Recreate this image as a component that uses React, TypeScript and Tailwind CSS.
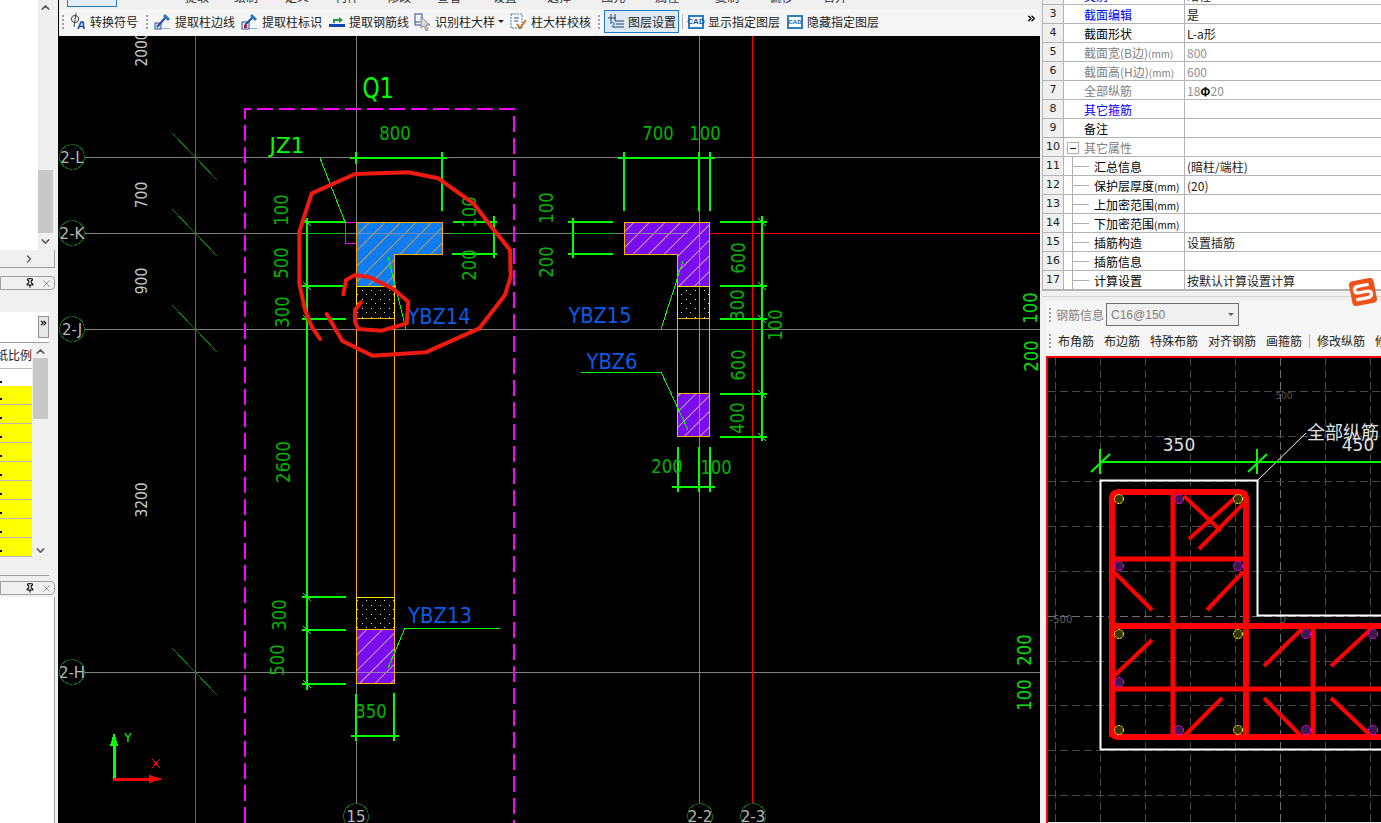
import { Pin, X } from "lucide-react";
import { ChevronUp, ChevronDown, ChevronRight, ChevronsRight } from "lucide-react";
import type { ReactNode } from "react";

const cjk = { fontFamily: '"Noto Sans CJK SC", sans-serif' };
const cadFont = '"DejaVu Sans", sans-serif';

const green = "#00ff00";
const dimText = "#00b400";
const blueText = "#0a5ce6";

type Row = { n: number; name: string; value?: ReactNode; color?: string; valueColor?: string; tree?: boolean; minus?: boolean };

const rows: Row[] = [
  { n: 2, name: "类别", value: "暗柱", color: "text-[#0000ff]" },
  { n: 3, name: "截面编辑", value: "是", color: "text-[#0000ff]" },
  { n: 4, name: "截面形状", value: "L-a形" },
  { n: 5, name: "截面宽(B边)(mm)", value: "800", color: "text-[#808080]", valueColor: "text-[#909090]" },
  { n: 6, name: "截面高(H边)(mm)", value: "600", color: "text-[#808080]", valueColor: "text-[#909090]" },
  {
    n: 7,
    name: "全部纵筋",
    value: (
      <>
        18<span className="text-black font-bold">Φ</span>20
      </>
    ),
    color: "text-[#808080]",
    valueColor: "text-[#909090]",
  },
  { n: 8, name: "其它箍筋", color: "text-[#0000ff]" },
  { n: 9, name: "备注" },
  { n: 10, name: "其它属性", color: "text-[#808080]", minus: true },
  { n: 11, name: "汇总信息", value: "(暗柱/端柱)", tree: true },
  { n: 12, name: "保护层厚度(mm)", value: "(20)", tree: true },
  { n: 13, name: "上加密范围(mm)", tree: true },
  { n: 14, name: "下加密范围(mm)", tree: true },
  { n: 15, name: "插筋构造", value: "设置插筋", tree: true },
  { n: 16, name: "插筋信息", tree: true },
  { n: 17, name: "计算设置", value: "按默认计算设置计算", tree: true },
];

// what is left of the toolbar row that is scrolled off the top of the shot
const clipped = [
  { t: "提取", ml: "ml-[68px]" },
  { t: "绘制", ml: "ml-[25px]" },
  { t: "定义", ml: "ml-[27px]" },
  { t: "构件", ml: "ml-[26px]" },
  { t: "修改", ml: "ml-[28px]" },
  { t: "查看", ml: "ml-[26px]" },
  { t: "设置", ml: "ml-[32px]" },
  { t: "选择", ml: "ml-[30px]" },
  { t: "图元", ml: "ml-[30px]" },
  { t: "属性", ml: "ml-[30px]" },
  { t: "复制", ml: "ml-[36px]" },
  { t: "偏移", ml: "ml-[30px]" },
  { t: "合并", ml: "ml-[30px]" },
];

const Grip = () => (
  <span className="flex flex-col gap-[2px] mr-1 shrink-0">
    <i className="block w-[2px] h-[2px] bg-[#a0a0a0]" />
    <i className="block w-[2px] h-[2px] bg-[#a0a0a0]" />
    <i className="block w-[2px] h-[2px] bg-[#a0a0a0]" />
    <i className="block w-[2px] h-[2px] bg-[#a0a0a0]" />
  </span>
);

const ToolIcon = ({ kind }: { kind: string }) => {
  if (kind === "symbol")
    return (
      <svg width="17" height="17" viewBox="0 0 17 17" className="shrink-0">
        <circle cx="6" cy="6" r="3.6" fill="none" stroke="#444" strokeWidth="1" />
        <path d="M7 0 L5 14" stroke="#444" strokeWidth="1" />
        <path d="M9 16 L12 9 L14 9 L15 16 M10.4 13.5 H14.4" fill="none" stroke="#1f4fa8" strokeWidth="1.7" />
      </svg>
    );
  if (kind === "pick")
    return (
      <svg width="17" height="17" viewBox="0 0 17 17" className="shrink-0">
        <rect x="1" y="10" width="6" height="6" fill="#dbe7f5" stroke="#2a4f9a" />
        <path d="M3 14 L12 4" stroke="#2a4f9a" strokeWidth="2" />
        <path d="M10 2 L15 7" stroke="#2a7fb5" strokeWidth="3" />
        <path d="M7 15.5 H16" stroke="#8db1dc" strokeWidth="1" />
      </svg>
    );
  if (kind === "mark")
    return (
      <svg width="17" height="17" viewBox="0 0 17 17" className="shrink-0">
        <rect x="1" y="9" width="7" height="7" fill="#e8eef7" stroke="#2a4f9a" />
        <rect x="3" y="12" width="3" height="3" fill="#d01030" />
        <path d="M4 12 L12 4" stroke="#2a4f9a" strokeWidth="2" />
        <path d="M10 2 L15 7" stroke="#2a7fb5" strokeWidth="3" />
        <path d="M8 15.5 H16" stroke="#8db1dc" strokeWidth="1" />
      </svg>
    );
  if (kind === "rebar")
    return (
      <svg width="16" height="17" viewBox="0 0 16 17" className="shrink-0">
        <path d="M0 12.5 H16" stroke="#1346b4" strokeWidth="3" />
        <path d="M5 10 V7 H12" fill="none" stroke="#1f9a3c" strokeWidth="2" />
        <path d="M10 4 L14 7 L10 10 Z" fill="#1f9a3c" />
      </svg>
    );
  if (kind === "cursor")
    return (
      <svg width="17" height="18" viewBox="0 0 17 18" className="shrink-0">
        <rect x="1" y="1" width="7" height="11" fill="#f4f7fb" stroke="#2a4f9a" />
        <path d="M1 9 H6" stroke="#2a4f9a" />
        <path d="M7 4 L16 12 H12 L14 17 L12 17.5 L10 13 L7 15 Z" fill="#d8d8d8" stroke="#707070" strokeWidth="0.8" />
      </svg>
    );
  if (kind === "check")
    return (
      <svg width="17" height="17" viewBox="0 0 17 17" className="shrink-0">
        <rect x="1" y="1" width="11" height="14" fill="#fff" stroke="#2a7fb5" strokeDasharray="2 1" />
        <path d="M4 5 H9 M4 8 H8" stroke="#2a4f9a" />
        <path d="M7 11 L10 15 L16 7" fill="none" stroke="#c8742a" strokeWidth="2" />
      </svg>
    );
  if (kind === "layers")
    return (
      <svg width="16" height="16" viewBox="0 0 16 16" className="shrink-0">
        <path d="M3 0 V10 M7 0 V7 M0 4 H8 M7 7 H16 M8 10 H16 M4 13 H16" stroke="#23406f" strokeWidth="1" fill="none" />
        <path d="M7 10 L4 8 M7 10 L4 12" stroke="#2a6fd0" strokeWidth="1" />
      </svg>
    );
  const big = kind === "cad";
  return (
    <span
      className={`shrink-0 flex items-center justify-center w-4 h-[14px] border-2 border-[#2f7fc0] bg-white text-[#1f55a8] font-bold leading-none ${big ? "text-[8px]" : "text-[6px]"}`}
      style={{ fontFamily: '"Liberation Sans", sans-serif' }}
    >
      CAD
    </span>
  );
};

const ToolBtn = ({ icon, label, caret, w }: { icon: string; label: string; caret?: boolean; w: string }) => (
  <div className={`flex items-center gap-1 shrink-0 ${w}`}>
    <ToolIcon kind={icon} />
    <span className="text-[12px] text-[#222] whitespace-nowrap" style={cjk}>
      {label}
    </span>
    {caret && <span className="w-0 h-0 ml-[-1px] border-x-[3px] border-x-transparent border-t-[3px] border-t-[#222]" />}
  </div>
);

const TitleBar = () => (
  <div className="h-[14px] w-[55px] border border-[#a0a0a0] rounded-r-sm bg-[#f0f0f0] flex items-center justify-end gap-[6px] pr-[2px]">
    <Pin size={10} strokeWidth={2.5} className="text-black" />
    <X size={11} strokeWidth={1} className="text-[#222]" />
  </div>
);

const LeftPanel = () => (
  <div className="w-[59px] shrink-0 h-full bg-[#f0f0f0] border-r border-black flex flex-col overflow-hidden">
    <div className="flex h-[250px] w-[53px] bg-white">
      <div className="w-[38px] bg-white" />
      <div className="w-[15px] bg-[#efefef] flex flex-col items-center">
        <ChevronUp size={13} strokeWidth={3} className="text-[#606060] mt-[1px]" />
        <div className="w-full h-[63px] bg-[#c8c8c8] mt-[156px]" />
        <ChevronDown size={13} strokeWidth={3} className="text-[#606060] mt-[2px]" />
      </div>
    </div>
    <div className="h-[18px] w-[55px] border-r border-b border-[#a0a0a0] flex justify-center items-center pl-[4px]">
      <ChevronRight size={12} strokeWidth={3} className="text-[#606060]" />
    </div>
    <div className="mt-2">
      <TitleBar />
    </div>
    <div className="mt-[22px] h-[262px] w-[53px] bg-white border-r-4 border-[#f0f0f0] flex flex-col relative">
      <div className="h-[26px] flex justify-end">
        <div className="w-[11px] h-[22px] mt-[4px] border border-[#909090] bg-[#e8e8e8] flex justify-center pt-[1px]">
          <ChevronsRight size={10} strokeWidth={3} className="text-black" />
        </div>
      </div>
      <div className="mt-[4px] flex-1 border-y border-[#a0a0a0] flex bg-[#f0f0f0] pb-[18px]">
        <div className="w-[32px] bg-white overflow-hidden flex flex-col">
          <div className="h-[25px] text-[12px] text-[#222] whitespace-nowrap flex justify-end leading-[24px]" style={cjk}>
            纸比例
          </div>
          <div className="h-[18px] border-t border-[#c0c0c0] relative">
            <i className="absolute left-0 top-[12px] w-[2px] h-[2px] bg-black" />
          </div>
          {[0, 1, 2, 3, 4, 5, 6, 7, 8].map((i) => (
            <div key={i} className="h-[19px] bg-[#ffff00] border-b border-[#b8b8b8] relative shrink-0">
              <i className="absolute left-0 top-[12px] w-[2px] h-[2px] bg-black" />
            </div>
          ))}
        </div>
        <div className="w-[15px] ml-[1px] flex flex-col items-center">
          <ChevronUp size={13} strokeWidth={3} className="text-[#606060] mt-[2px]" />
          <div className="w-full h-[61px] bg-[#c8c8c8]" />
          <div className="flex-1" />
          <ChevronDown size={13} strokeWidth={3} className="text-[#606060]" />
        </div>
      </div>
    </div>
    <div className="mt-[7px]">
      <TitleBar />
    </div>
    <div className="mt-[2px] flex-1 w-[55px] bg-white border-r border-[#a0a0a0]" />
  </div>
);

const MainToolbar = () => (
  <div className="shrink-0">
    {/* clipped first toolbar row */}
    <div className="h-[7px] bg-[#f0f0f0] relative overflow-hidden flex items-start pl-[8px]">
      <div className="w-[50px] h-[7px] shrink-0 border-x border-b border-[#1f7bc4] bg-[#e4eefa]" />
      {clipped.map((c) => (
        <span key={c.t} className={`text-[12px] leading-[12px] -mt-[9px] text-[#333] shrink-0 ${c.ml}`} style={cjk}>
          {c.t}
        </span>
      ))}
    </div>
    <div className="h-[29px] bg-[#f0f0f0] flex items-center">
      <div className="h-[26px] w-[84px] ml-px bg-[#f6f6f6] rounded-sm flex items-center pl-[2px] gap-[1px] shrink-0">
        <Grip />
        <ToolBtn icon="symbol" label="转换符号" w="w-[70px]" />
      </div>
      <div className="h-[26px] w-[451px] bg-[#f6f6f6] rounded-sm flex items-center pl-[2px] gap-[2px] shrink-0">
        <Grip />
        <ToolBtn icon="pick" label="提取柱边线" w="w-[85px]" />
        <ToolBtn icon="mark" label="提取柱标识" w="w-[86px]" />
        <ToolBtn icon="rebar" label="提取钢筋线" w="w-[83px]" />
        <ToolBtn icon="cursor" label="识别柱大样" caret w="w-[94px]" />
        <ToolBtn icon="check" label="柱大样校核" w="w-[84px]" />
      </div>
      <div className="h-[26px] flex-1 ml-[1px] bg-[#f6f6f6] rounded-sm flex items-center pl-[2px] shrink-0">
        <Grip />
        <div className="h-[23px] w-[75px] border border-[#1f7bc4] bg-[#dde9f5] flex items-center gap-[4px] pl-[3px] shrink-0">
          <ToolIcon kind="layers" />
          <span className="text-[12px] text-[#222] whitespace-nowrap" style={cjk}>
            图层设置
          </span>
        </div>
        <div className="w-px h-[15px] bg-[#b0b0b0] mx-[3px]" />
        <div className="w-[99px] ml-[2px] shrink-0">
          <ToolBtn icon="cad" label="显示指定图层" w="" />
        </div>
        <ToolBtn icon="cad2" label="隐藏指定图层" w="" />
        <div className="flex-1" />
        <ChevronsRight size={11} strokeWidth={3} className="text-black mr-[3px] mb-[6px]" />
      </div>
    </div>
  </div>
);

const scribbleOuter = [
  [180, 597], [155, 560], [135, 510], [118, 430], [118, 275], [155, 160], [285, 102], [445, 97], [535, 115], [640, 190], [690, 255], [750, 330], [752, 410], [735, 465], [658, 565], [497, 637], [337, 647], [247, 603], [200, 522],
];
const scribbleInner = [
  [250, 463], [258, 420], [285, 405], [330, 412], [400, 447], [445, 485], [440, 550], [365, 572], [295, 567], [285, 545], [285, 510], [303, 487],
];
const toPage = (pts: number[][]) => pts.map(([x, y]) => `${260 + x / 3},${140 + y / 3}`).join(" ");

const Bubble = ({ x, y, t }: { x: number; y: number; t: string }) => (
  <g>
    <circle cx={x} cy={y} r={12.5} fill="#000" stroke="#0a6a0a" strokeWidth="1" strokeDasharray="9 0.5" />
    <text x={x} y={y + 5.5} textAnchor="middle" fontSize="15" fill="#b8b8b8" fontFamily={cadFont}>
      {t}
    </text>
  </g>
);

const DimText = ({ x, y, t, rot, fill = dimText, size = 19 }: { x: number; y: number; t: string; rot?: boolean; fill?: string; size?: number }) => (
  <text
    x={x}
    y={y}
    textAnchor="middle"
    dominantBaseline="central"
    fontSize={size}
    fill={fill}
    fontFamily={cadFont}
    textLength={t.length * (size * 0.55)}
    lengthAdjust="spacingAndGlyphs"
    transform={rot ? `rotate(-90 ${x} ${y})` : undefined}
  >
    {t}
  </text>
);

const Label = ({ x, y, t, w, fill = blueText, size = 22 }: { x: number; y: number; t: string; w: number; fill?: string; size?: number }) => (
  <text x={x} y={y} textAnchor="middle" fontSize={size} fill={fill} fontFamily={cadFont} textLength={w} lengthAdjust="spacingAndGlyphs">
    {t}
  </text>
);

const L = ({ x1, y1, x2, y2, c = green, w = 2 }: { x1: number; y1: number; x2: number; y2: number; c?: string; w?: number }) => (
  <line x1={x1} y1={y1} x2={x2} y2={y2} stroke={c} strokeWidth={w} />
);

const Tick = ({ x, y }: { x: number; y: number }) => <line x1={x - 4} y1={y - 4} x2={x + 4} y2={y + 4} stroke={green} strokeWidth="1" />;

const MainCanvas = () => (
  <svg viewBox="59 36 981 787" className="block w-[981px] h-[787px] bg-black" style={{ shapeRendering: "crispEdges" }}>
    <defs>
      <pattern id="hatchBlue" width="11" height="11" patternUnits="userSpaceOnUse" patternTransform="rotate(45)">
        <rect width="11" height="11" fill="#0f7cf2" />
        <line x1="0" y1="0" x2="0" y2="11" stroke="#c49a50" strokeWidth="1" />
      </pattern>
      <pattern id="hatchPurple" width="11" height="11" patternUnits="userSpaceOnUse" patternTransform="rotate(45)">
        <rect width="11" height="11" fill="#7a0cf0" />
        <line x1="0" y1="0" x2="0" y2="11" stroke="#c8a0a8" strokeWidth="1" />
      </pattern>
      <pattern id="dots" width="9" height="9" patternUnits="userSpaceOnUse">
        <rect width="9" height="9" fill="#000" />
        <rect x="2" y="2" width="1" height="1" fill="#ddd" />
        <rect x="6" y="6" width="1" height="1" fill="#ddd" />
      </pattern>
    </defs>

    {/* axis lines */}
    <L x1={195.5} y1={36} x2={195.5} y2={823} c="#5f6f5f" w={1} />
    <L x1={356.5} y1={36} x2={356.5} y2={823} c="#808080" w={1} />
    <L x1={699.5} y1={36} x2={699.5} y2={823} c="#808080" w={1} />
    <L x1={59} y1={157.5} x2={1040} y2={157.5} c="#808080" w={1} />
    <L x1={59} y1={233.5} x2={688} y2={233.5} c="#808080" w={1} />
    <L x1={59} y1={329.5} x2={1040} y2={329.5} c="#808080" w={1} />
    <L x1={59} y1={672.5} x2={1040} y2={672.5} c="#808080" w={1} />
    <L x1={752.5} y1={36} x2={752.5} y2={823} c="#ff0000" w={1} />
    <L x1={688} y1={233.5} x2={1040} y2={233.5} c="#ff0000" w={1} />

    {/* diagonal axis marks */}
    {[133, 209, 305, 648].map((y) => (
      <line key={y} x1={172} y1={y} x2={217} y2={y + 47} stroke="#0a7a0a" strokeWidth="1" />
    ))}

    <Bubble x={72} y={157} t="2-L" />
    <Bubble x={72} y={233} t="2-K" />
    <Bubble x={72} y={329} t="2-J" />
    <Bubble x={72} y={672} t="2-H" />
    <Bubble x={356} y={816} t="15" />
    <Bubble x={700} y={816} t="2-2" />
    <Bubble x={753} y={816} t="2-3" />

    <DimText x={141} y={49} t="2000" rot fill="#c8c8c8" size={16} />
    <DimText x={141} y={195} t="700" rot fill="#c8c8c8" size={16} />
    <DimText x={141} y={281} t="900" rot fill="#c8c8c8" size={16} />
    <DimText x={141} y={500} t="3200" rot fill="#c8c8c8" size={16} />

    {/* right side axis dims */}
    <DimText x={1030} y={308} t="100" rot fill="#00e000" />
    <DimText x={1031} y={356} t="200" rot fill="#00e000" />
    <DimText x={1024} y={650} t="200" rot fill="#00e000" />
    <DimText x={1024} y={695} t="100" rot fill="#00e000" />

    {/* magenta zone */}
    <path d="M245 823 V109 H514 V823" fill="none" stroke="#ff00ff" strokeWidth="2" strokeDasharray="16 6" />
    <Label x={378} y={98} t="Q1" w={31} fill={green} size={28} />

    <Label x={287} y={153} t="JZ1" w={35} fill={green} size={21} />
    <L x1={320} y1={158} x2={345} y2={222} w={1} />
    <path d="M356 222.5 H345.5 V243.5 H356" fill="none" stroke="#ff00ff" strokeWidth="1" />

    {/* column 1 */}
    <path d="M356.5 222.5 H442 V254 H394 V286 H356.5 Z" fill="url(#hatchBlue)" stroke="#ffa800" strokeWidth="1" />
    <L x1={356} y1={233.5} x2={442} y2={233.5} c="#6a8fb8" w={1} />
    <rect x={356.5} y={286.5} width={37.5} height={32} fill="url(#dots)" stroke="#ffe000" strokeWidth="1" />
    <rect x={356.5} y={318.5} width={37.5} height={279} fill="none" stroke="#ffb000" strokeWidth="1" />
    <rect x={356.5} y={597.5} width={37.5} height={32} fill="url(#dots)" stroke="#ffe000" strokeWidth="1" />
    <rect x={356.5} y={629.5} width={37.5} height={54} fill="url(#hatchPurple)" stroke="#ffb000" strokeWidth="1" />
    <L x1={356} y1={672.5} x2={394} y2={672.5} c="#9a7ab8" w={1} />
    <L x1={356.5} y1={150} x2={356.5} y2={211} c="#808080" w={1} />

    {/* column 1 dims */}
    <L x1={350} y1={158} x2={447} y2={158} />
    <L x1={356} y1={152} x2={356} y2={164} />
    <L x1={442} y1={152} x2={442} y2={211} />
    <DimText x={395} y={133} t="800" />
    <L x1={307} y1={218} x2={307} y2={690} />
    {[222, 286, 319, 597, 630, 684].map((y) => (
      <g key={y}>
        <L x1={302} y1={y} x2={346} y2={y} />
        <Tick x={307} y={y} />
      </g>
    ))}
    <L x1={307} y1={233} x2={345} y2={233} c="#00c000" w={1} />
    <DimText x={281} y={210} t="100" rot />
    <DimText x={281} y={263} t="500" rot />
    <DimText x={282} y={312} t="300" rot />
    <DimText x={283} y={462} t="2600" rot />
    <DimText x={279} y={615} t="300" rot />
    <DimText x={277} y={660} t="500" rot />
    <L x1={453} y1={222} x2={497} y2={222} />
    <L x1={452} y1={233} x2={497} y2={233} c="#00c000" w={1} />
    <L x1={452} y1={254} x2={497} y2={254} />
    <L x1={494} y1={216} x2={494} y2={258} />
    <DimText x={469} y={212} t="100" rot />
    <DimText x={469} y={265} t="200" rot />
    <L x1={351} y1={736} x2={399} y2={736} />
    <L x1={356} y1={694} x2={356} y2={741} />
    <L x1={394} y1={693} x2={394} y2={741} />
    <DimText x={371} y={711} t="350" />
    <Label x={439} y={324} t="YBZ14" w={63} />
    <L x1={388} y1={257} x2={406} y2={329} w={1} />
    <Label x={440} y={623} t="YBZ13" w={64} />
    <path d="M500 628 H405 L388 668" fill="none" stroke={green} strokeWidth="1" />

    {/* column 2 */}
    <path d="M624.5 222.5 H709.5 V286 H677 V254 H624.5 Z" fill="url(#hatchPurple)" stroke="#ffb000" strokeWidth="1" />
    <rect x={677.5} y={286.5} width={32} height={32} fill="url(#dots)" stroke="#ffe000" strokeWidth="1" />
    <rect x={677.5} y={318.5} width={32} height={75} fill="none" stroke="#ffb000" strokeWidth="1" />
    <rect x={677.5} y={393.5} width={32} height={43} fill="url(#hatchPurple)" stroke="#ffb000" strokeWidth="1" />
    <L x1={624} y1={233.5} x2={688} y2={233.5} c="#9a7ab8" w={1} />
    <L x1={699.5} y1={222} x2={699.5} y2={437} c="#a08ab0" w={1} />

    {/* column 2 dims */}
    <L x1={618} y1={158} x2={715} y2={158} />
    <L x1={624} y1={152} x2={624} y2={211} />
    <L x1={699} y1={152} x2={699} y2={211} />
    <L x1={710} y1={152} x2={710} y2={211} />
    <DimText x={658} y={133} t="700" />
    <DimText x={705} y={133} t="100" />
    <L x1={573} y1={218} x2={573} y2={258} />
    <L x1={568} y1={222} x2={613} y2={222} />
    <L x1={568} y1={233} x2={614} y2={233} c="#00c000" w={1} />
    <L x1={568} y1={254} x2={613} y2={254} />
    <DimText x={546} y={208} t="100" rot />
    <DimText x={546} y={262} t="200" rot />
    <L x1={762} y1={216} x2={762} y2={441} />
    {[222, 286, 319, 394, 437].map((y) => (
      <g key={y}>
        <L x1={720} y1={y} x2={767} y2={y} />
        <Tick x={762} y={y} />
      </g>
    ))}
    <L x1={720} y1={329} x2={766} y2={329} c="#00c000" w={1} />
    <DimText x={738} y={258} t="600" rot />
    <DimText x={737} y={305} t="300" rot />
    <DimText x={738} y={365} t="600" rot />
    <DimText x={737} y={418} t="400" rot />
    <DimText x={775} y={325} t="100" rot />
    <L x1={672} y1={487} x2={715} y2={487} />
    <L x1={678} y1={447} x2={678} y2={492} />
    <L x1={699} y1={447} x2={699} y2={492} />
    <L x1={710} y1={447} x2={710} y2={492} />
    <DimText x={667} y={466} t="200" />
    <DimText x={716} y={467} t="100" />
    <Label x={600} y={323} t="YBZ15" w={63} />
    <Label x={612} y={369} t="YBZ6" w={51} />
    <path d="M661 329 L683 261" fill="none" stroke={green} strokeWidth="1" />
    <path d="M581 372 H661 L688 430" fill="none" stroke={green} strokeWidth="1" />

    {/* hand scribble */}
    <g style={{ shapeRendering: "auto" }} fill="none" stroke="#f01a10" strokeWidth="4" strokeLinecap="round" strokeLinejoin="round">
      <polyline points={toPage(scribbleOuter)} />
      <polyline points={toPage(scribbleInner)} />
    </g>

    {/* UCS icon */}
    <L x1={114} y1={744} x2={114} y2={780} w={3} />
    <path d="M114 732 L118 746 H110 Z" fill={green} />
    <L x1={114} y1={779} x2={152} y2={779} c="#ff0000" w={3} />
    <path d="M163 779 L149 783 V775 Z" fill="#ff0000" />
    <text x={128} y={742} textAnchor="middle" fontSize="12" fill={green} fontFamily={cadFont}>
      Y
    </text>
    <path d="M152 759 L160 768 M160 759 L152 768" stroke="#ff0000" strokeWidth="1" />
  </svg>
);

const gridX = [1055, 1100, 1145, 1190, 1235, 1280, 1325, 1370];
const gridY = [392, 437, 482, 527, 572, 617, 662, 706, 751, 796];
const yellowBars = [[1119, 500], [1238, 500], [1119, 635], [1238, 635], [1119, 731], [1238, 731]];
const purpleBars = [[1179, 500], [1119, 567], [1238, 567], [1306, 635], [1373, 635], [1119, 683], [1179, 731], [1306, 731], [1373, 731]];
const ties = [
  [1184, 497, 1221, 532], [1237, 497, 1189, 540], [1246, 502, 1199, 550], [1114, 573, 1152, 611], [1243, 573, 1207, 611],
  [1114, 677, 1152, 641], [1184, 737, 1222, 699], [1264, 667, 1302, 630], [1331, 667, 1371, 630], [1264, 699, 1301, 737], [1331, 699, 1371, 737],
];

const RebarCanvas = () => (
  <svg viewBox="1048 359 333 464" className="block w-[333px] h-[464px] bg-black">
    {gridX.map((x) => (
      <line key={x} x1={x + 0.5} y1={359} x2={x + 0.5} y2={823} stroke={x === 1280 ? "#707070" : "#484848"} strokeWidth="1" strokeDasharray="8 4" />
    ))}
    {gridY.map((y) => (
      <line key={y} x1={1048} y1={y + 0.5} x2={1381} y2={y + 0.5} stroke={y === 617 ? "#707070" : "#484848"} strokeWidth="1" strokeDasharray="8 4" />
    ))}
    <text x={1284} y={400} textAnchor="middle" fontSize="9" fill="#505050" fontFamily={cadFont}>
      500
    </text>
    <text x={1061} y={624} textAnchor="middle" fontSize="10" fill="#606060" fontFamily={cadFont}>
      -500
    </text>
    <text x={1283} y={624} textAnchor="middle" fontSize="10" fill="#606060" fontFamily={cadFont}>
      0
    </text>

    <path d="M1100.5 750.5 V481.5 H1257.5 V616.5 H1381 M1100 750.5 H1381" fill="none" stroke="#fff" strokeWidth="2" />
    <L x1={1258} y1={481} x2={1306} y2={434} c="#fff" w={1} />
    <text x={1307} y={440} fontSize="18" fill="#e0e0e0" style={{ fontFamily: '"Noto Sans CJK SC", serif' }}>
      全部纵筋
    </text>
    <text x={1358} y={452} textAnchor="middle" fontSize="17" fill="#e0e0e0" fontFamily={cadFont}>
      450
    </text>
    <text x={1179} y={452} textAnchor="middle" fontSize="17" fill="#e0e0e0" fontFamily={cadFont}>
      350
    </text>

    <L x1={1100} y1={463} x2={1381} y2={463} />
    <L x1={1100} y1={450} x2={1100} y2={475} />
    <L x1={1257} y1={450} x2={1257} y2={475} />
    <L x1={1091} y1={473} x2={1110} y2={455} />
    <L x1={1248} y1={473} x2={1267} y2={455} />

    {/* rebar */}
    <g fill="none" stroke="#ff0000">
      <path d="M1112 738 V500 Q1112 493 1119 493 H1239 Q1246 493 1246 500 V738" strokeWidth="6" />
      <path d="M1112 731 Q1112 738 1119 738 H1381 M1112 627 H1381" strokeWidth="6" />
      <path d="M1173 493 V738 M1313 627 V738 M1112 560 H1246 M1112 690 H1381" strokeWidth="5" />
      {ties.map(([x1, y1, x2, y2], i) => (
        <line key={i} x1={x1} y1={y1} x2={x2} y2={y2} strokeWidth="4" />
      ))}
    </g>
    {yellowBars.map(([x, y]) => (
      <circle key={`${x}-${y}`} cx={x} cy={y} r={4.5} fill="#3a3400" stroke="#ffff00" strokeWidth="1" strokeDasharray="2.5 0.7" />
    ))}
    {purpleBars.map(([x, y]) => (
      <circle key={`${x}-${y}`} cx={x} cy={y} r={4.5} fill="#3a1a4a" stroke="#ff00ff" strokeWidth="1" strokeDasharray="2.5 0.7" />
    ))}
  </svg>
);

const SogouBadge = () => (
  <svg width="30" height="30" viewBox="0 0 30 30" className="absolute left-[1348px] top-[277px] z-10">
    <g transform="rotate(-11 15 15)">
      <rect x="2.5" y="2.5" width="25" height="25" rx="4" fill="#f0521c" />
      <path d="M22 8.5 H11 Q7 8.5 7 12 Q7 15 11 15 H19 Q23 15 23 18 Q23 21.5 19 21.5 H7" fill="none" stroke="#fff" strokeWidth="3.2" />
    </g>
  </svg>
);

const NameText = ({ name }: { name: string }) => {
  if (!name.endsWith("(mm)")) return <>{name}</>;
  return (
    <>
      {name.slice(0, -4)}
      <span className="text-[10px]">(mm)</span>
    </>
  );
};

const PropRow = ({ row }: { row: Row }) => (
  <div className="h-[19px] flex border-b border-[#b4b4b4] bg-white text-[12px]" style={cjk}>
    <div className="w-[21px] shrink-0 bg-[#f0f0f0] border-r border-[#b4b4b4] text-center text-[11px] leading-[17px] text-[#222]" style={{ fontFamily: cadFont }}>
      {row.n}
    </div>
    <div className={`w-[121px] shrink-0 border-r border-[#b4b4b4] relative whitespace-nowrap leading-[20px] ${row.tree ? "pl-[30px]" : "pl-[20px]"} ${row.color ?? "text-black"}`}>
      {row.minus && (
        <span className="absolute left-[3px] top-[4px] w-[12px] h-[12px] border border-[#b0b0b0] bg-white flex items-center justify-center">
          <i className="block w-[6px] h-px bg-[#222]" />
        </span>
      )}
      {row.tree && (
        <>
          <i className="absolute left-[8px] -top-[1px] h-[20px] w-px bg-[#b0b0b0]" />
          <i className="absolute left-[9px] top-[9px] w-[16px] h-px bg-[#b0b0b0]" />
        </>
      )}
      <NameText name={row.name} />
    </div>
    <div className={`flex-1 pl-[2px] whitespace-nowrap leading-[19px] ${row.valueColor ?? "text-[#222]"}`}>{row.value}</div>
  </div>
);

const RightPanel = () => (
  <div className="w-[341px] shrink-0 h-full bg-[#f0f0f0] flex flex-col overflow-hidden">
    <div className="h-[291px] shrink-0 overflow-hidden ml-[2px] border-l border-b border-[#b4b4b4] bg-white">
      <div className="-mt-[14px]">
        {rows.map((row) => (
          <PropRow key={row.n} row={row} />
        ))}
      </div>
    </div>
    <div className="mt-[5px] ml-[2px] border-t border-[#d4d4d4] h-[60px] shrink-0 pl-[4px] pt-[4px]">
      <div className="h-[27px] flex items-center bg-[#f6f6f6] pl-[3px]">
        <Grip />
        <span className="text-[12px] text-[#808080] ml-[1px] mr-[2px]" style={cjk}>
          钢筋信息
        </span>
        <div className="w-[133px] h-[23px] border border-[#707070] bg-[#f0f0f0] flex items-center justify-between px-1 text-[12px] text-[#808080]" style={{ fontFamily: '"Liberation Sans", sans-serif' }}>
          C16@150
          <span className="w-0 h-0 border-x-[3px] border-x-transparent border-t-[3px] border-t-[#606060]" />
        </div>
      </div>
      <div className="h-[25px] pt-px flex items-center bg-[#f6f6f6] pl-[3px] text-[12px] text-[#222] whitespace-nowrap overflow-hidden" style={cjk}>
        <Grip />
        <span className="ml-[3px] w-[46px] shrink-0">布角筋</span>
        <span className="w-[46px] shrink-0">布边筋</span>
        <span className="w-[58px] shrink-0">特殊布筋</span>
        <span className="w-[58px] shrink-0">对齐钢筋</span>
        <span className="w-[43px] shrink-0">画箍筋</span>
        <i className="w-px h-[14px] bg-[#b0b0b0] mr-[7px] shrink-0" />
        <span className="w-[58px] shrink-0">修改纵筋</span>
        <span className="shrink-0">修改</span>
      </div>
    </div>
    <div className="ml-[6px] flex-1 border-l-2 border-t-2 border-[#ff0000] overflow-hidden">
      <RebarCanvas />
    </div>
  </div>
);

export default function App() {
  return (
    <div className="relative w-[1381px] h-[823px] flex overflow-hidden bg-[#f0f0f0]">
      <LeftPanel />
      <div className="w-[981px] shrink-0 flex flex-col">
        <MainToolbar />
        <MainCanvas />
      </div>
      <RightPanel />
      <SogouBadge />
    </div>
  );
}
